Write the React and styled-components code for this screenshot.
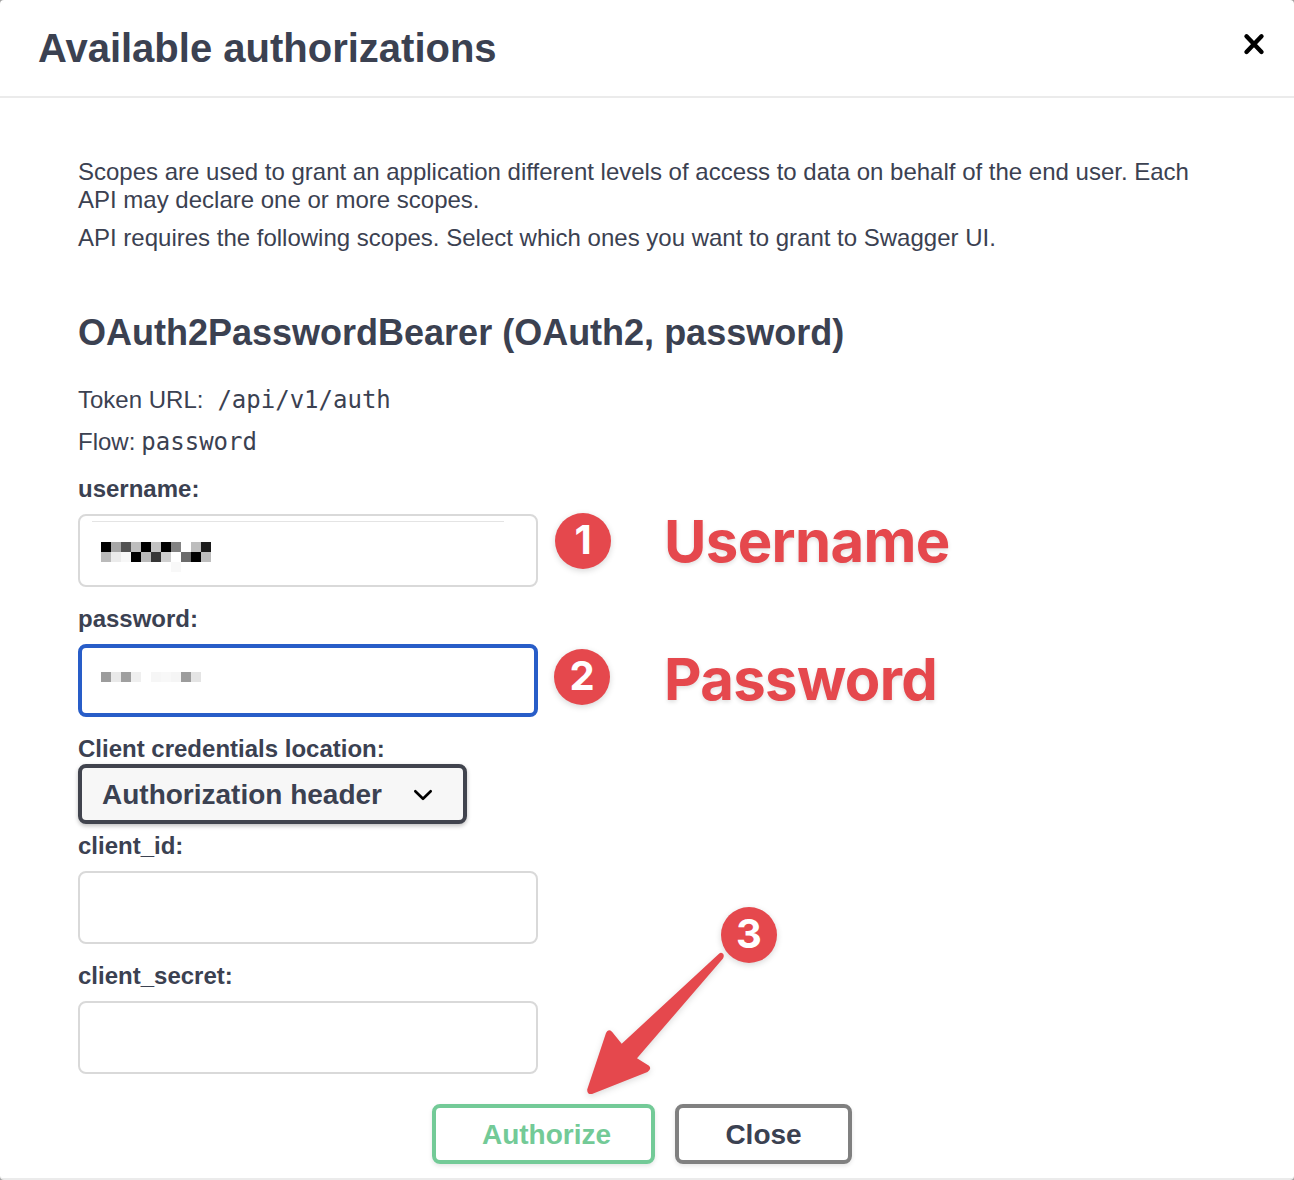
import React from "react";
import styled, { createGlobalStyle } from "styled-components";

const GlobalStyle = createGlobalStyle`
  * { box-sizing: border-box; }
  html, body { margin: 0; padding: 0; background: #a0a0a0; }
`;

const INK = "#3b4151";
const RED = "#e5484d";

const Modal = styled.section`
  position: relative;
  width: 1294px;
  height: 1180px;
  overflow: hidden;
  display: flex;
  flex-direction: column;
  background: #fff;
  border-bottom: 2px solid #ebebeb;
  border-radius: 4px;
  color: ${INK};
  font-family: "Liberation Sans", Arial, sans-serif;
`;

const Header = styled.header`
  display: flex;
  align-items: center;
  justify-content: space-between;
  height: 98px;
  padding: 0 26px 0 38px;
  border-bottom: 2px solid #ebebeb;
`;

const Title = styled.h3`
  margin: 0;
  font-size: 40px;
  line-height: 46px;
  font-weight: 700;
  white-space: nowrap;
`;

const CloseIconButton = styled.button`
  display: flex;
  padding: 0;
  margin-bottom: 8px;
  border: 0;
  background: none;
`;

const Content = styled.div`
  display: flex;
  flex-direction: column;
  align-items: flex-start;
  padding: 60px 78px 0;
`;

const Paragraph = styled.p`
  margin: 0 0 10px;
  font-size: 24px;
  line-height: 28px;
  white-space: nowrap;
`;

const SchemeTitle = styled.h4`
  margin: 50px 0 32px;
  font-size: 36px;
  line-height: 42px;
  font-weight: 700;
  white-space: nowrap;
`;

const Detail = styled.p`
  display: flex;
  align-items: center;
  gap: ${(p) => p.$gap};
  margin: 0 0 14px;
  height: 28px;
  font-size: 24px;
  line-height: 28px;
`;

const Code = styled.code`
  font-family: "DejaVu Sans Mono", monospace;
  font-size: 24px;
`;

const Form = styled.div`
  display: flex;
  flex-direction: column;
  align-items: flex-start;
  padding-top: 5px;
`;

const Label = styled.label`
  font-size: 24px;
  line-height: 28px;
  font-weight: 700;
  white-space: nowrap;
  margin-bottom: ${(p) => p.$gap || "11px"};
`;

const Field = styled.div`
  display: flex;
  flex-direction: column;
  width: 460px;
  height: 73px;
  margin-bottom: 18px;
  padding: ${(p) => (p.$focused ? "24px 19px" : "5px 11px")};
  border: ${(p) => (p.$focused ? "4px solid #285dc8" : "2px solid #d9d9d9")};
  border-radius: 8px;
`;

const FieldRule = styled.i`
  width: 412px;
  height: 1px;
  margin: 0 0 20px 1px;
  background: #e4e4e4;
`;

const MaskGrid = styled.div`
  display: grid;
  grid-template-columns: repeat(11, 10px);
  grid-auto-rows: 10px;
  margin-left: ${(p) => p.$inset || "0"};
`;

const MaskCell = styled.span`
  background: ${(p) => p.$shade};
`;

const Select = styled.div`
  display: flex;
  align-items: center;
  justify-content: space-between;
  width: 389px;
  height: 60px;
  margin-bottom: 8px;
  padding: 1px 28px 0 20px;
  border: 4px solid #41444e;
  border-radius: 8px;
  background: #f7f7f7;
  box-shadow: 0 2px 4px rgba(0, 0, 0, 0.25);
  font-size: 28px;
  font-weight: 700;
  white-space: nowrap;
`;

const Actions = styled.div`
  display: flex;
  gap: 20px;
  padding-top: 12px;
  margin-left: 354px;
`;

const Button = styled.button`
  width: ${(p) => p.$width};
  height: 60px;
  padding: 2px 0 0 ${(p) => p.$indent || "0"};
  border: 4px solid ${(p) => p.$border};
  border-radius: 8px;
  background: transparent;
  box-shadow: 0 2px 4px rgba(0, 0, 0, 0.1);
  color: ${(p) => p.$color};
  font-family: inherit;
  font-size: 28px;
  font-weight: 700;
`;

const Badge = styled.span`
  position: absolute;
  left: ${(p) => p.$x}px;
  top: ${(p) => p.$y}px;
  width: 56px;
  height: 56px;
  border-radius: 50%;
  background: ${RED};
  box-shadow: 0 2px 6px rgba(0, 0, 0, 0.16);
  color: #fff;
  font-family: Inter, sans-serif;
  font-size: 40px;
  font-weight: 700;
  line-height: 54px;
  text-align: center;
`;

const Callout = styled.strong`
  position: absolute;
  left: ${(p) => p.$x}px;
  top: ${(p) => p.$y}px;
  color: ${RED};
  font-family: Inter, sans-serif;
  font-size: 58px;
  font-weight: 700;
  line-height: 70px;
  letter-spacing: -0.65px;
  text-shadow: 0 2px 4px rgba(0, 0, 0, 0.13);
`;

const Arrow = styled.svg`
  position: absolute;
  left: 580px;
  top: 945px;
  filter: drop-shadow(0 2px 3px rgba(0, 0, 0, 0.14));
`;

const USERNAME_MASK = [
  "#000", "#a6a6a6", "#525252", "#bdbdbd", "#000", "#c2c2c2", "#000", "#828282", "#fff", "#bdbdbd", "#1c1c1c",
  "#bababa", "#ebebeb", "#f7f7f7", "#000", "#bababa", "#363636", "#cfcfcf", "#fff", "#6b6b6b", "#000", "#bdbdbd",
  "#fff", "#fff", "#fff", "#fff", "#fff", "#fff", "#fff", "#f8f8f8",
];

const PASSWORD_MASK = [
  "#9c9c9c", "#e9e9e9", "#9f9f9f", "#efefef", "#fff", "#f6f6f6", "#f8f8f8", "#f5f5f5", "#9c9c9c", "#e4e4e4",
];

function Mask({ shades, inset }) {
  return (
    <MaskGrid $inset={inset}>
      {shades.map((shade, i) => (
        <MaskCell key={i} $shade={shade} />
      ))}
    </MaskGrid>
  );
}

export default function App() {
  return (
    <>
      <GlobalStyle />
      <Modal>
        <Header>
          <Title>Available authorizations</Title>
          <CloseIconButton aria-label="Close dialog">
            <svg width="28" height="28" viewBox="0 0 28 28">
              <path d="M6.5 6.3 21.5 21.9M21.5 6.3 6.5 21.9" stroke="#000" strokeWidth="4.4" strokeLinecap="round" />
            </svg>
          </CloseIconButton>
        </Header>
        <Content>
          <Paragraph>
            Scopes are used to grant an application different levels of access to data on behalf of the end user. Each
            <br />
            API may declare one or more scopes.
          </Paragraph>
          <Paragraph>
            API requires the following scopes. Select which ones you want to grant to Swagger UI.
          </Paragraph>
          <SchemeTitle>OAuth2PasswordBearer (OAuth2, password)</SchemeTitle>
          <Detail $gap="14px">
            Token URL: <Code>/api/v1/auth</Code>
          </Detail>
          <Detail $gap="6px">
            Flow: <Code>password</Code>
          </Detail>
          <Form>
            <Label>username:</Label>
            <Field>
              <FieldRule />
              <Mask shades={USERNAME_MASK} inset="10px" />
            </Field>
            <Label>password:</Label>
            <Field $focused>
              <Mask shades={PASSWORD_MASK} />
            </Field>
            <Label $gap="1px">Client credentials location:</Label>
            <Select>
              Authorization header
              <svg width="24" height="24" viewBox="0 0 24 24" fill="none">
                <path d="M4.3 8.2 12 15.8 19.7 8.2" stroke="#000" strokeWidth="2.6" strokeLinecap="round" strokeLinejoin="round" />
              </svg>
            </Select>
            <Label>client_id:</Label>
            <Field />
            <Label>client_secret:</Label>
            <Field />
          </Form>
          <Actions>
            <Button $width="223px" $border="#73ca97" $color="#73ca97" $indent="6px">Authorize</Button>
            <Button $width="177px" $border="#808080" $color={INK}>Close</Button>
          </Actions>
        </Content>

        <Badge $x={555} $y={513}>1</Badge>
        <Callout $x={664} $y={506}>Username</Callout>
        <Badge $x={554} $y={649}>2</Badge>
        <Callout $x={664} $y={644}>Password</Callout>
        <Badge $x={721} $y={907}>3</Badge>
        <Arrow width="160" height="160" viewBox="0 0 160 160">
          <path
            d="M139 8.7 41.7 98.7 32 86.7Q28 83.5 26 88L7.2 144.5Q7 149.5 12 149L67.5 127Q72 124 69 120.8L57 113.3 143 13.5Q145 9.5 142 8Q140.5 7.3 139 8.7Z"
            fill={RED}
          />
        </Arrow>
      </Modal>
    </>
  );
}
